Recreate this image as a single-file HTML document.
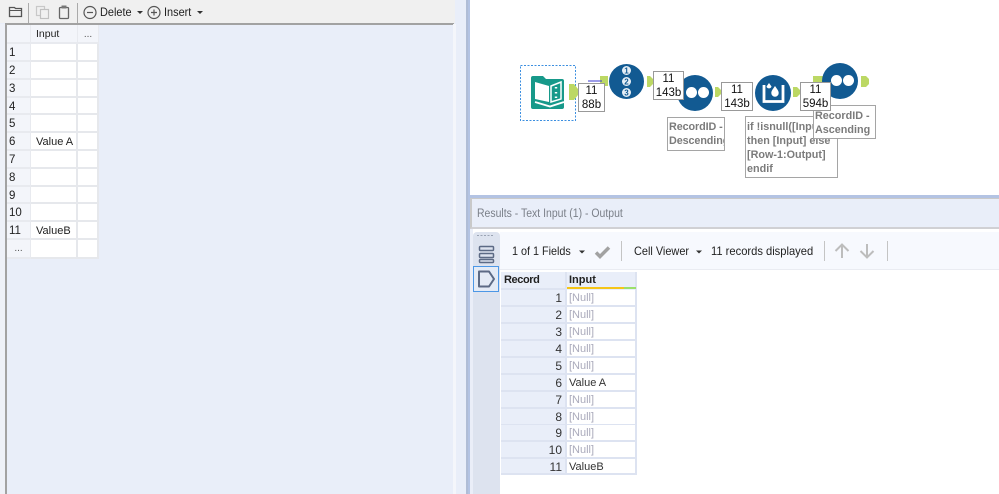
<!DOCTYPE html>
<html><head><meta charset="utf-8">
<style>
html,body{margin:0;padding:0}
body{width:999px;height:494px;overflow:hidden;position:relative;background:#fff;font-family:"Liberation Sans",sans-serif;font-size:12px;color:#222}
.a{position:absolute;box-sizing:border-box}
.t{position:absolute;white-space:nowrap;line-height:14px;transform:scaleX(.91);transform-origin:0 0}
.lh{background:#f3f5fa;border-right:1px solid #e8eaef;border-bottom:2px solid #e8eaef;font-size:11.500px;line-height:18px;padding-left:2px}
.lc{background:#fff;border-right:2px solid #e6e8ec;border-bottom:2px solid #e6e8ec;font-size:11px;line-height:18px;padding-left:5px}
.rh{background:#e9eef9;border-right:2px solid #dde3f1;border-bottom:2px solid #dde3f1;text-align:right;padding-right:3px;font-size:12px;line-height:16px;color:#333}
.rc{background:#fff;border-right:2px solid #dde3f1;border-bottom:2px solid #dde3f1;padding-left:2px;font-size:11px;line-height:16px;color:#aab}
.box{position:absolute;box-sizing:border-box;background:#fff;border:1px solid #999;font-size:11.500px;line-height:13.500px;color:#111;text-align:center;padding-top:1px}
.note{position:absolute;box-sizing:border-box;background:#fff;border:1px solid #a5a5a5;font-size:10.800px;font-weight:bold;color:#7b7b7b;line-height:14px;padding:3px 0 0 1px;white-space:nowrap;overflow:hidden}
.c{position:absolute;border-radius:50%;background:#125a92}
.sep{position:absolute;width:1px;background:#c4c4c4}
</style></head><body>

<!-- left side -->
<div class="a" style="left:0;top:0;width:467px;height:494px;background:#e9eef9"></div>
<div class="a" style="left:0;top:0;width:455px;height:23px;background:#f0f0f0"></div>
<div class="a" style="left:5px;top:23px;width:449px;height:2px;background:#a2a2a2"></div>
<div class="a" style="left:453px;top:24px;width:3px;height:470px;background:#f4f6fb"></div>
<div class="a" style="left:0;top:24px;width:5px;height:470px;background:#eef1f8"></div>
<div class="a" style="left:5px;top:24px;width:2px;height:470px;background:#a2a2a2"></div>

<svg class="a" style="left:0;top:0" width="210" height="24" fill="none">
<path d="M9.500 16.500V7.500H14.500L15.500 8.500H21.500V16.500Z" stroke="#555" stroke-width="1.300"/>
<path d="M9.500 10.500H21.500" stroke="#555"/>
<rect x="36.500" y="6.500" width="8" height="9" stroke="#c8c8c8" stroke-width="1.200"/>
<rect x="40.500" y="9.500" width="8" height="9" stroke="#c0c0c0" stroke-width="1.200" fill="#f0f0f0"/>
<rect x="59.500" y="7.500" width="9" height="11" rx="1" stroke="#666" stroke-width="1.300"/>
<rect x="61.500" y="5.500" width="5" height="3" fill="#777"/>
<circle cx="90" cy="12.500" r="6" stroke="#555" stroke-width="1.200"/>
<path d="M87 12.500H93" stroke="#555" stroke-width="1.200"/>
<circle cx="154" cy="12.500" r="6" stroke="#555" stroke-width="1.200"/>
<path d="M151 12.500H157M154 9.500V15.500" stroke="#555" stroke-width="1.200"/>
<path d="M137 11H143L140 14Z" fill="#333"/>
<path d="M197 11H203L200 14Z" fill="#333"/>
</svg>
<div class="sep" style="left:28px;top:3px;height:20px;background:#aaa"></div>
<div class="sep" style="left:77px;top:3px;height:20px;background:#aaa"></div>
<div class="t" style="left:100px;top:5px;font-size:12px">Delete</div>
<div class="t" style="left:164px;top:5px;font-size:12px">Insert</div>

<!-- left grid -->
<div class="a lh" style="left:7px;top:25px;width:24px;height:19px"></div>
<div class="a lh" style="left:31px;top:25px;width:47px;height:19px;font-size:10.500px;line-height:19px;padding-left:5px">Input</div>
<div class="a lh" style="left:78px;top:25px;width:21px;height:19px;font-size:10px;line-height:19px;text-align:center;color:#555;padding:0">...</div>

<div class="a lh" style="left:7px;top:44px;width:24px;height:18px">1</div><div class="a lc" style="left:31px;top:44px;width:47px;height:18px"></div><div class="a lc" style="left:78px;top:44px;width:21px;height:18px"></div>
<div class="a lh" style="left:7px;top:62px;width:24px;height:18px">2</div><div class="a lc" style="left:31px;top:62px;width:47px;height:18px"></div><div class="a lc" style="left:78px;top:62px;width:21px;height:18px"></div>
<div class="a lh" style="left:7px;top:80px;width:24px;height:18px">3</div><div class="a lc" style="left:31px;top:80px;width:47px;height:18px"></div><div class="a lc" style="left:78px;top:80px;width:21px;height:18px"></div>
<div class="a lh" style="left:7px;top:98px;width:24px;height:17px">4</div><div class="a lc" style="left:31px;top:98px;width:47px;height:17px"></div><div class="a lc" style="left:78px;top:98px;width:21px;height:17px"></div>
<div class="a lh" style="left:7px;top:115px;width:24px;height:18px">5</div><div class="a lc" style="left:31px;top:115px;width:47px;height:18px"></div><div class="a lc" style="left:78px;top:115px;width:21px;height:18px"></div>
<div class="a lh" style="left:7px;top:133px;width:24px;height:18px">6</div><div class="a lc" style="left:31px;top:133px;width:47px;height:18px">Value A</div><div class="a lc" style="left:78px;top:133px;width:21px;height:18px"></div>
<div class="a lh" style="left:7px;top:151px;width:24px;height:18px">7</div><div class="a lc" style="left:31px;top:151px;width:47px;height:18px"></div><div class="a lc" style="left:78px;top:151px;width:21px;height:18px"></div>
<div class="a lh" style="left:7px;top:169px;width:24px;height:18px">8</div><div class="a lc" style="left:31px;top:169px;width:47px;height:18px"></div><div class="a lc" style="left:78px;top:169px;width:21px;height:18px"></div>
<div class="a lh" style="left:7px;top:187px;width:24px;height:17px">9</div><div class="a lc" style="left:31px;top:187px;width:47px;height:17px"></div><div class="a lc" style="left:78px;top:187px;width:21px;height:17px"></div>
<div class="a lh" style="left:7px;top:204px;width:24px;height:18px">10</div><div class="a lc" style="left:31px;top:204px;width:47px;height:18px"></div><div class="a lc" style="left:78px;top:204px;width:21px;height:18px"></div>
<div class="a lh" style="left:7px;top:222px;width:24px;height:18px">11</div><div class="a lc" style="left:31px;top:222px;width:47px;height:18px">ValueB</div><div class="a lc" style="left:78px;top:222px;width:21px;height:18px"></div>
<div class="a lh" style="left:7px;top:240px;width:24px;height:19px;font-size:10px;line-height:18px;text-align:center;color:#555;padding:0">...</div><div class="a lc" style="left:31px;top:240px;width:47px;height:19px"></div><div class="a lc" style="left:78px;top:240px;width:21px;height:19px"></div>

<!-- splitter -->
<div class="a" style="left:466px;top:0;width:2px;height:494px;background:#b0bdd6"></div>
<div class="a" style="left:468px;top:0;width:2px;height:494px;background:#b3c3e3"></div>

<!-- canvas -->
<div class="a" style="left:470px;top:0;width:529px;height:195px;background:#fff"></div>
<div class="a" style="left:470px;top:195px;width:529px;height:3px;background:#b3c3e3"></div>

<svg class="a" style="left:470px;top:0" width="529" height="195" fill="none">
<rect x="50.500" y="65.500" width="55" height="55" stroke="#3c8fe0" stroke-dasharray="2 1.500"/>
<!-- book icon -->
<path d="M61 78a2 2 0 0 1 2-2h10l3 3h16a2 2 0 0 1 2 2v26a2 2 0 0 1-2 2H63a2 2 0 0 1-2-2Z" fill="#17998a"/>
<path d="M65 82l14 4v16l-14-3Z" fill="#fff"/>
<path d="M81 86l10-4v17l-10 3Z" stroke="#fff" stroke-width="1.500"/>
<path d="M86 87v1.500M86 92v1.500M86 96.500v1.500" stroke="#fff" stroke-width="2.400"/>
<path d="M65 102l15 4.500 14-4.500" stroke="#fff" stroke-width="1.800"/>
<!-- anchors -->
<path d="M99 84h5l4 5v6l-4 5h-5Z" fill="#bcd864"/>
<path d="M130 76h8v10h-8Z" fill="#bcd864"/>
<path d="M177 76h3l3 3v5l-3 3h-3Z" fill="#bcd864"/>
<path d="M245 87h3l3 3v4l-3 3h-3Z" fill="#bcd864"/>
<path d="M323 87h4l3 3v4l-3 3h-4Z" fill="#bcd864"/>
<path d="M343 76h10v11h-10Z" fill="#bcd864"/>
<path d="M391 76h5l3 3v5l-3 3h-5Z" fill="#bcd864"/>
<path d="M118 81h14" stroke="#3a3ad0" stroke-width="1"/>
<path d="M204 92h14" stroke="#dcdcf4"/>
<path d="M110 90h14a6 6 0 0 0 6-6" stroke="#d8d8ee"/>
</svg>

<!-- tools -->
<div class="c" style="left:609px;top:64px;width:35px;height:35px"></div>
<svg class="a" style="left:609px;top:64px" width="35" height="35">
<circle cx="17.500" cy="6.500" r="4.500" fill="#e6eef5"/><circle cx="17.500" cy="17.500" r="4.500" fill="#e6eef5"/><circle cx="17.500" cy="28.500" r="4.500" fill="#e6eef5"/>
<text x="17.500" y="9.500" font-size="8" font-weight="bold" font-family="Liberation Sans" text-anchor="middle" fill="#125a92">1</text>
<text x="17.500" y="20.500" font-size="8" font-weight="bold" font-family="Liberation Sans" text-anchor="middle" fill="#125a92">2</text>
<text x="17.500" y="31.500" font-size="8" font-weight="bold" font-family="Liberation Sans" text-anchor="middle" fill="#125a92">3</text>
</svg>

<div class="c" style="left:677px;top:75px;width:36px;height:36px"></div>
<div class="a" style="left:686px;top:87px;width:11px;height:11px;border-radius:50%;background:#fff"></div>
<div class="a" style="left:698px;top:87px;width:11px;height:11px;border-radius:50%;background:#fff"></div>

<div class="c" style="left:755px;top:75px;width:36px;height:36px"></div>
<svg class="a" style="left:755px;top:75px" width="36" height="36" fill="none">
<path d="M9 10v16.500h19V10" stroke="#fff" stroke-width="2.800"/>
<path d="M14 8l2.500 3.500a2.600 2.600 0 0 1-5 0Z" fill="#fff"/>
<path d="M20 11c2.500 3.500 3.700 5.200 3.700 7a3.700 3.700 0 0 1-7.400 0c0-1.800 1.200-3.500 3.700-7Z" fill="#fff"/>
</svg>

<div class="c" style="left:822px;top:63px;width:36px;height:36px"></div>
<div class="a" style="left:831px;top:75px;width:11px;height:11px;border-radius:50%;background:#fff"></div>
<div class="a" style="left:843px;top:75px;width:11px;height:11px;border-radius:50%;background:#fff"></div>

<!-- count boxes -->
<div class="box" style="left:578px;top:83px;width:27px;height:29px">11<br>88b</div>
<div class="box" style="left:653px;top:71px;width:31px;height:29px">11<br>143b</div>
<div class="box" style="left:721px;top:82px;width:32px;height:29px">11<br>143b</div>

<!-- notes -->
<div class="note" style="left:667px;top:117px;width:58px;height:34px;padding-top:2px;letter-spacing:-.1px">RecordID -<br>Descending</div>
<div class="note" style="left:745px;top:116px;width:93px;height:62px;padding-top:3px">if !isnull([Input])<br>then [Input] else<br>[Row-1:Output]<br>endif</div>
<div class="note" style="left:813px;top:105px;width:63px;height:34px">RecordID -<br>Ascending</div>
<div class="box" style="left:800px;top:82px;width:31px;height:29px">11<br>594b</div>

<!-- results -->
<div class="a" style="left:470px;top:198px;width:529px;height:296px;background:#fff"></div>
<div class="a" style="left:470px;top:198px;width:529px;height:31px;background:#e9eef9;border-top:1px solid #c9c9c9;border-left:2px solid #c9c9c9;border-bottom:2px solid #d0d0d4"></div>
<div class="t" style="left:477px;top:207px;font-size:11.500px;color:#7a7f88">Results - Text Input (1) - Output</div>
<div class="a" style="left:470px;top:229px;width:3px;height:265px;background:#eaeef8"></div>
<div class="a" style="left:473px;top:232px;width:27px;height:262px;background:#dde3ef;border-radius:4px 4px 0 0"></div>
<div class="a" style="left:500px;top:232px;width:499px;height:38px;background:#f7f9fe;border-bottom:1px solid #eaecf2"></div>
<svg class="a" style="left:472px;top:232px" width="28" height="35" fill="none">
<path d="M5 3.500h17" stroke="#9aa3b3" stroke-dasharray="2 1.500"/>
<rect x="7.500" y="14.500" width="14" height="4" rx="1" stroke="#5c6a85" stroke-width="1.500"/>
<rect x="7.500" y="21.500" width="14" height="4" rx="1" stroke="#5c6a85" stroke-width="1.500"/>
<rect x="7.500" y="27.500" width="14" height="3" rx="1" stroke="#5c6a85" stroke-width="1.500"/>
</svg>
<svg class="a" style="left:472px;top:266px" width="28" height="27" fill="none">
<rect x="1.500" y="0.500" width="25" height="25" fill="#e4ebf6" stroke="#4c97e6"/>
<path d="M7 5.500h10l5 7.500-5 7.500H7Z" stroke="#5c6a85" stroke-width="2" stroke-linejoin="round"/>
</svg>

<div class="t" style="left:512px;top:244px;font-size:12px;transform:scaleX(.9)">1 of 1 Fields</div>
<svg class="a" style="left:575px;top:240px" width="320" height="24" fill="none">
<path d="M4 10.500h6l-3 3Z" fill="#333"/>
<path d="M21 12.500l4 4 9-9" stroke="#a2a2a2" stroke-width="3.500"/>
<path d="M121 10.500h6l-3 3Z" fill="#333"/>
<path d="M267 18V4.500M260.500 11L267 4.500l6.500 6.500" stroke="#bdbdbd" stroke-width="2"/>
<path d="M292 4v13.500M285.500 11L292 17.500l6.500-6.500" stroke="#bdbdbd" stroke-width="2"/>
</svg>
<div class="sep" style="left:621px;top:241px;height:20px"></div>
<div class="t" style="left:634px;top:244px;font-size:12px">Cell Viewer</div>
<div class="t" style="left:711px;top:244px;font-size:12px;transform:scaleX(.93)">11 records displayed</div>
<div class="sep" style="left:824px;top:241px;height:20px"></div>
<div class="sep" style="left:887px;top:241px;height:20px"></div>

<!-- results table -->
<div class="a" style="left:501px;top:272px;width:66px;height:18px;background:#e9eef9;border-right:2px solid #dde3f1;border-bottom:2px solid #dde3f1;font-size:11px;font-weight:bold;line-height:17px;padding-left:3px;letter-spacing:-.4px">Record</div>
<div class="a" style="left:567px;top:272px;width:70px;height:18px;background:#e9eef9;border-right:2px solid #dde3f1;font-size:11px;font-weight:bold;line-height:17px;padding-left:2px">Input</div>
<div class="a" style="left:567px;top:287px;width:57px;height:2px;background:#f5c518"></div>
<div class="a" style="left:624px;top:287px;width:12px;height:2px;background:#9be06a"></div>

<div class="a rh" style="left:501px;top:290px;width:66px;height:17px">1</div><div class="a rc" style="left:567px;top:290px;width:70px;height:17px">[Null]</div>
<div class="a rh" style="left:501px;top:307px;width:66px;height:17px">2</div><div class="a rc" style="left:567px;top:307px;width:70px;height:17px">[Null]</div>
<div class="a rh" style="left:501px;top:324px;width:66px;height:17px">3</div><div class="a rc" style="left:567px;top:324px;width:70px;height:17px">[Null]</div>
<div class="a rh" style="left:501px;top:341px;width:66px;height:17px">4</div><div class="a rc" style="left:567px;top:341px;width:70px;height:17px">[Null]</div>
<div class="a rh" style="left:501px;top:358px;width:66px;height:17px">5</div><div class="a rc" style="left:567px;top:358px;width:70px;height:17px">[Null]</div>
<div class="a rh" style="left:501px;top:375px;width:66px;height:17px">6</div><div class="a rc" style="left:567px;top:375px;width:70px;height:17px;color:#333">Value A</div>
<div class="a rh" style="left:501px;top:392px;width:66px;height:17px">7</div><div class="a rc" style="left:567px;top:392px;width:70px;height:17px">[Null]</div>
<div class="a rh" style="left:501px;top:409px;width:66px;height:17px">8</div><div class="a rc" style="left:567px;top:409px;width:70px;height:17px">[Null]</div>
<div class="a rh" style="left:501px;top:425px;width:66px;height:17px">9</div><div class="a rc" style="left:567px;top:425px;width:70px;height:17px">[Null]</div>
<div class="a rh" style="left:501px;top:442px;width:66px;height:17px">10</div><div class="a rc" style="left:567px;top:442px;width:70px;height:17px">[Null]</div>
<div class="a rh" style="left:501px;top:459px;width:66px;height:16px">11</div><div class="a rc" style="left:567px;top:459px;width:70px;height:16px;color:#333">ValueB</div>

</body></html>
